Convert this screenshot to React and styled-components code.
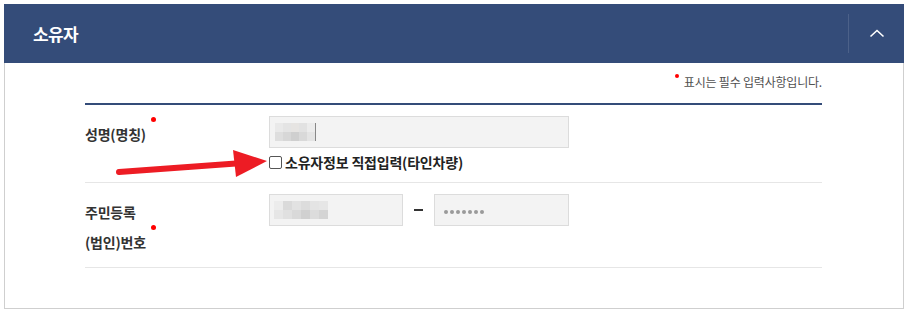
import React from 'react'
import styled, { createGlobalStyle } from 'styled-components'

const GlobalStyle = createGlobalStyle`
  html, body {
    margin: 0;
    padding: 0;
    background: #fff;
  }
  body {
    font-family: "Noto Sans CJK KR", "Noto Sans", sans-serif;
    color: #333;
  }
`

const Section = styled.section`
  position: relative;
  width: 900px;
  margin: 4px 0 0 4px;
`

const Header = styled.div`
  height: 59px;
  background: #344c79;
  display: flex;
  align-items: center;
  justify-content: space-between;
  h2 {
    margin: 0 0 0 29px;
    font-size: 17px;
    font-weight: 700;
    letter-spacing: -0.6px;
    color: #fff;
  }
`

const Toggle = styled.button`
  width: 56px;
  height: 39px;
  padding: 0;
  border: 0;
  border-left: 1px solid rgba(255, 255, 255, 0.12);
  background: transparent;
  display: flex;
  align-items: center;
  justify-content: center;
  cursor: pointer;
`

const Body = styled.div`
  border: 1px solid #cfcfcf;
  border-top: 0;
  padding: 10px 81px 40px 80px;
`

const Notice = styled.p`
  margin: 0;
  text-align: right;
  font-size: 12px;
  line-height: 18px;
  letter-spacing: -0.2px;
  color: #505050;
  span {
    display: inline-block;
    width: 4px;
    height: 4px;
    border-radius: 50%;
    background: #f00;
    vertical-align: top;
    margin-right: 5px;
    position: relative;
    top: 1px;
  }
`

const Form = styled.div`
  margin-top: 12px;
  border-top: 2px solid #344c79;
`

const Row = styled.div`
  display: grid;
  grid-template-columns: 184px 1fr;
  align-items: start;
  padding: 11px 0 10px;
  border-bottom: 1px solid #e6e6e6;
`

const Label = styled.div`
  padding-top: 3px;
  font-size: 14px;
  font-weight: 700;
  line-height: 30px;
  letter-spacing: -0.2px;
  color: #333;
`

const Required = styled.i`
  display: inline-block;
  width: 5px;
  height: 5px;
  border-radius: 50%;
  background: #f00;
  vertical-align: top;
  margin-left: 5px;
  position: relative;
  top: -2px;
`

const Fields = styled.div`
  display: flex;
  align-items: center;
`

const Field = styled.div`
  box-sizing: border-box;
  width: ${({ $w }) => $w}px;
  height: 32px;
  background: #f3f3f3;
  border: 1px solid #dcdcdc;
  display: flex;
  align-items: center;
  padding-left: ${({ $pl }) => $pl || 5}px;
`

const Mosaic = styled.div`
  display: grid;
  grid-template-columns: repeat(${({ $cols }) => $cols}, ${({ $cell }) => $cell}px);
  grid-auto-rows: 9px;
`

const Cell = styled.span`
  background: ${({ $c }) => $c};
`

const Caret = styled.span`
  width: 1px;
  height: 18px;
  background: #888;
`

const Dash = styled.span`
  width: 9px;
  height: 2px;
  background: #333;
  margin: 0 11px 0 11px;
`

const Dots = styled.div`
  display: flex;
  gap: 2px;
  margin-top: 3px;
  span {
    width: 4px;
    height: 4px;
    border-radius: 50%;
    background: #9a9a9a;
  }
`

const Check = styled.label`
  display: flex;
  align-items: center;
  gap: 3px;
  height: 20px;
  margin-top: 4px;
  font-size: 14px;
  font-weight: 700;
  letter-spacing: -0.2px;
  color: #222;
  span {
    box-sizing: border-box;
    width: 13px;
    height: 13px;
    border: 1px solid #555;
    border-radius: 2px;
    background: #fff;
  }
`

const Arrow = styled.svg`
  position: absolute;
  left: 106px;
  top: 141px;
  overflow: visible;
`

const nameCells = [
  '#e9e9e9', '#e4e4e4', '#e6e4e2', '#e2e2e2', '#ececec',
  '#dedede', '#d7d7d7', '#cfcfcf', '#d9d9d9', '#e4e4e4',
]

const rrnCells = [
  '#ececec', '#dadada', '#e2e2e2', '#dcdcdc', '#e4e4e4', '#e6e6e6',
  '#e6e6e6', '#e0e0e0', '#d9d9d9', '#d0d0d0', '#dcdcdc', '#d4d4d4',
]

const App = () => (
  <>
    <GlobalStyle />
    <Section>
      <Header>
        <h2>소유자</h2>
        <Toggle aria-label="접기">
          <svg width="16" height="9" viewBox="0 0 16 9">
            <path d="M1.5 7.5 L8 1.5 L14.5 7.5" fill="none" stroke="#fff" strokeWidth="1.6" />
          </svg>
        </Toggle>
      </Header>
      <Body>
        <Notice><span />표시는 필수 입력사항입니다.</Notice>
        <Form>
          <Row>
            <Label>성명(명칭)<Required /></Label>
            <div>
              <Field $w={300}>
                <Mosaic $cols={5} $cell={8}>
                  {nameCells.map((c, i) => <Cell key={i} $c={c} />)}
                </Mosaic>
                <Caret />
              </Field>
              <Check>
                <span />
                소유자정보 직접입력(타인차량)
              </Check>
            </div>
          </Row>
          <Row>
            <Label>주민등록<br />(법인)번호<Required /></Label>
            <Fields>
              <Field $w={134} $pl={4}>
                <Mosaic $cols={6} $cell={9}>
                  {rrnCells.map((c, i) => <Cell key={i} $c={c} />)}
                </Mosaic>
              </Field>
              <Dash />
              <Field $w={135} $pl={9}>
                <Dots>
                  {[0, 1, 2, 3, 4, 5, 6].map(i => <span key={i} />)}
                </Dots>
              </Field>
            </Fields>
          </Row>
        </Form>
      </Body>
      <Arrow width="165" height="40" viewBox="0 0 165 40">
        <line x1="9" y1="27" x2="126" y2="18.5" stroke="#ed1c24" strokeWidth="6" strokeLinecap="round" />
        <polygon points="157,16 123,5 126,32" fill="#ed1c24" />
      </Arrow>
    </Section>
  </>
)

export default App
